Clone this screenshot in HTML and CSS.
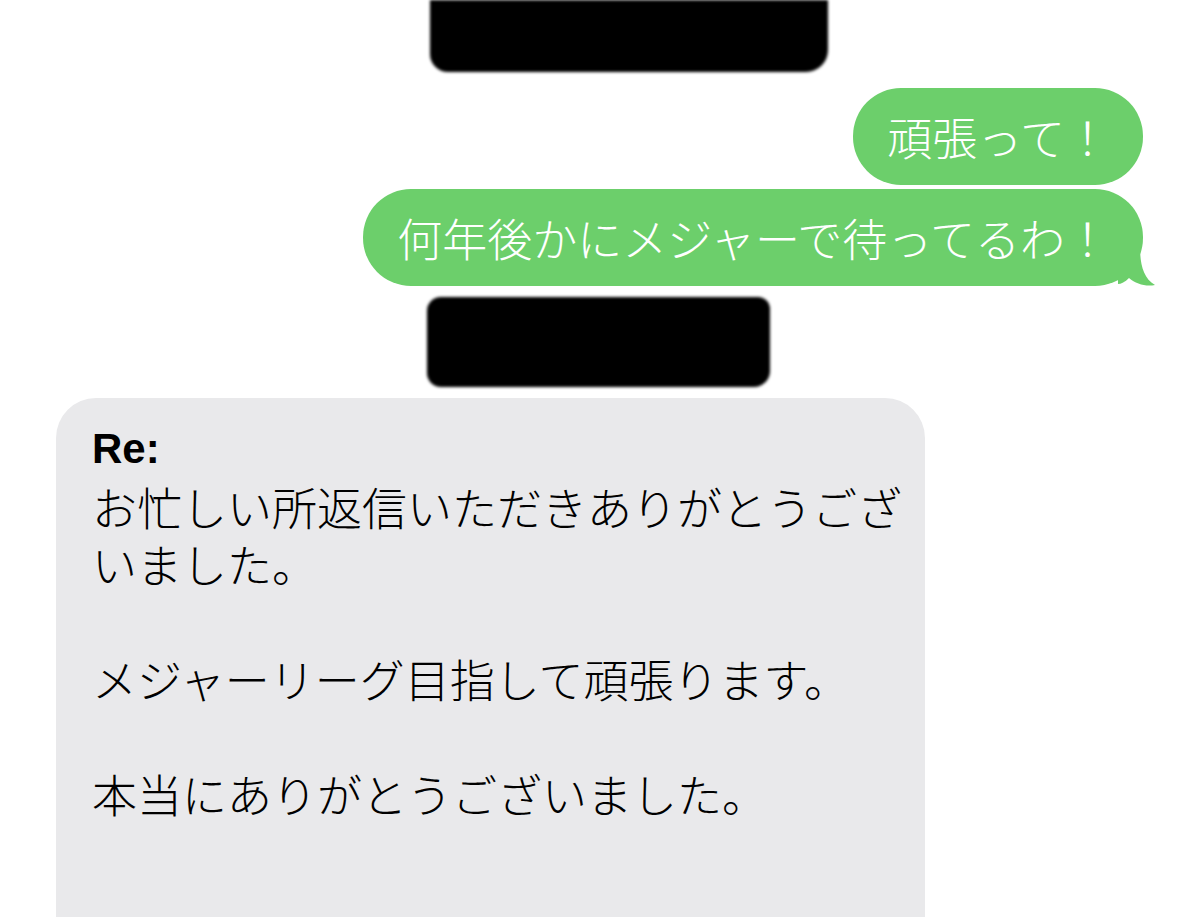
FILE: index.html
```html
<!DOCTYPE html>
<html lang="ja">
<head>
    <meta charset="UTF-8">
    <meta name="viewport" content="width=device-width, initial-scale=1.0">
    <title>メッセージ</title>
    <link rel="stylesheet" href="styles.css">
</head>
<body>
<div class="thread">
    <div class="redact redact-top"></div>

    <div class="row sent first">
        <div class="bubble green">頑張って！</div>
    </div>
    <div class="row sent">
        <div class="bubble green">何年後かにメジャーで待ってるわ！
            <svg class="tail-svg" width="40" height="40" viewBox="0 0 40 40">
                <path d="M0 0 L22 0 C22 18 25 32 37 39 C28 41 18 38 11 32 C7 36 3 38 0 38 Z" fill="#6ccf6b"/>
            </svg>
        </div>
    </div>

    <div class="redact redact-mid"></div>

    <div class="row received">
        <div class="bubble gray">
            <div class="subject">Re:</div>
            <div class="body-text">お忙しい所返信いただきありがとうございました。<br><br>メジャーリーグ目指して頑張ります。<br><br>本当にありがとうございました。</div>
        </div>
    </div>
</div>
</body>
</html>
```

FILE: styles.css
```css
body {
    margin: 0;
    padding: 0;
    background-color: #ffffff;
    font-family: "Noto Sans CJK JP", "Noto Sans", sans-serif;
    overflow: hidden;
}
.thread {
    display: flex;
    flex-direction: column;
}
.thread > div {
    flex-shrink: 0;
}
.redact {
    background-color: #000;
    filter: blur(1.5px);
}
.redact-top {
    width: 398px;
    height: 72px;
    margin-left: 430px;
    border-radius: 0 0 22px 18px;
}
.redact-mid {
    width: 343px;
    height: 90px;
    margin: 11px 0 11px 427px;
    border-radius: 14px 12px 16px 14px;
}
.row {
    display: flex;
}
.sent {
    justify-content: flex-end;
    padding-right: 57px;
    margin-top: 4px;
}
.sent.first {
    margin-top: 16px;
}
.received {
    padding-left: 56px;
}
.bubble {
    font-size: 45px;
    line-height: 57px;
    border-radius: 48px;
    position: relative;
}
.green {
    background-color: #6ccf6b;
    color: #ffffff;
    font-weight: 300;
    padding: 20px 33px 20px 34px;
}
.tail-svg {
    position: absolute;
    right: -15px;
    bottom: 0;
}
.gray {
    background-color: #e9e9eb;
    color: #000;
    width: 869px;
    box-sizing: border-box;
    padding: 22px 16px 0 36px;
    border-radius: 40px 40px 0 0;
    height: 560px;
    font-weight: 300;
}
.subject {
    font-family: "Liberation Sans", Arial, sans-serif;
    font-weight: 700;
    font-size: 42px;
    line-height: 57.5px;
}
.body-text {
    line-height: 57.5px;
}
```
